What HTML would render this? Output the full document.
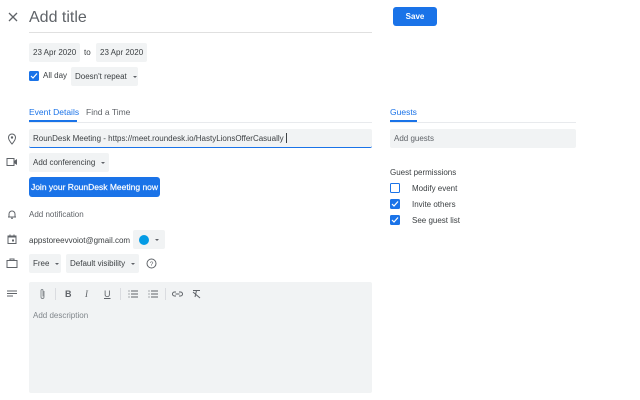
<!DOCTYPE html>
<html><head><meta charset="utf-8"><style>
*{box-sizing:border-box;margin:0;padding:0}
body{width:640px;height:400px;background:#fff;font-family:"Liberation Sans",Arial,sans-serif;color:#3c4043;position:relative;overflow:hidden;font-size:8px}
.a{position:absolute;white-space:nowrap}
.box{position:absolute;background:#f1f3f4;border-radius:2px;display:flex;align-items:center;padding-left:4px;font-size:8px;color:#3c4043;white-space:nowrap}
.cb{position:absolute;width:10px;height:10px;border-radius:1.5px;background:#1a73e8}
.cb svg{position:absolute;left:1px;top:1px}
.caret{display:inline-block;width:0;height:0;border-left:2.5px solid transparent;border-right:2.5px solid transparent;border-top:2.5px solid #5f6368;margin-left:6px}
.ic{position:absolute}
</style></head><body>
<svg class="ic" style="left:8px;top:12px" width="10" height="10" viewBox="0 0 10 10"><path d="M1 1L9 9M9 1L1 9" stroke="#5f6368" stroke-width="1.3"/></svg>
<div class="a" style="left:29px;top:9px;font-size:16px;color:#5f6368">Add title</div>
<div class="a" style="left:29px;top:32px;width:343px;height:1px;background:#e0e0e0"></div>
<div class="a" style="left:393px;top:7px;width:44px;height:19px;background:#1a73e8;border-radius:3px;color:#fff;font-size:8px;font-weight:bold;display:flex;align-items:center;justify-content:center">Save</div>

<div class="box" style="left:29px;top:43px;width:51px;height:19px">23 Apr 2020</div>
<div class="a" style="left:84px;top:48px;font-size:8px">to</div>
<div class="box" style="left:96px;top:43px;width:51px;height:19px">23 Apr 2020</div>
<div class="cb" style="left:29px;top:71px"><svg width="8" height="8" viewBox="0 0 8 8"><path d="M1 4L3 6L7 1.5" stroke="#fff" stroke-width="1.2" fill="none"/></svg></div>
<div class="a" style="left:43px;top:71px">All day</div>
<div class="box" style="left:71px;top:67px;width:67px;height:19px">Doesn't repeat<span class="caret"></span></div>

<div class="a" style="left:29px;top:107px;font-size:8.5px;color:#1a73e8">Event Details</div>
<div class="a" style="left:86px;top:107px;font-size:8.5px;color:#5f6368">Find a Time</div>
<div class="a" style="left:29px;top:122px;width:343px;height:1px;background:#e8eaed"></div>
<div class="a" style="left:29px;top:120px;width:48px;height:2px;background:#1a73e8"></div>

<svg class="ic" style="left:7px;top:133px" width="10" height="12" viewBox="0 0 10 12"><path d="M5 11C5 11 1.5 7 1.5 4.5A3.5 3.5 0 0 1 8.5 4.5C8.5 7 5 11 5 11Z" stroke="#5f6368" stroke-width="1" fill="none"/><circle cx="5" cy="4.5" r="1.2" fill="#5f6368"/></svg>
<div class="box" style="left:29px;top:129px;width:343px;height:19px;border-bottom:1.5px solid #1a73e8">RounDesk Meeting - https://meet.roundesk.io/HastyLionsOfferCasually<span style="display:inline-block;width:1px;height:10px;background:#3c4043;margin-left:2px"></span></div>

<svg class="ic" style="left:6px;top:157px" width="12" height="10" viewBox="0 0 12 10"><rect x="1" y="1.5" width="7" height="7" stroke="#5f6368" fill="none"/><path d="M8 4L11 2V8L8 6Z" fill="#5f6368"/></svg>
<div class="box" style="left:29px;top:153px;width:80px;height:19px">Add conferencing<span class="caret"></span></div>
<div class="a" style="left:29px;top:177px;width:131px;height:20px;background:#1a73e8;border-radius:3px;color:#fff;font-size:8.5px;display:flex;align-items:center;justify-content:center;-webkit-text-stroke:0.2px #fff">Join your RounDesk Meeting now</div>

<svg class="ic" style="left:7px;top:209px" width="10" height="10" viewBox="0 0 10 10"><path d="M2 8V5A3 3 0 0 1 8 5V8ZM1 8H9M4 9.3H6" stroke="#5f6368" fill="none"/></svg>
<div class="a" style="left:29px;top:210px;color:#5f6368">Add notification</div>

<svg class="ic" style="left:7px;top:234px" width="10" height="10" viewBox="0 0 10 10"><rect x="1" y="2" width="8" height="7.5" stroke="#5f6368" fill="none"/><path d="M1 3H9M3 0.5V2.5M7 0.5V2.5" stroke="#5f6368"/><rect x="5" y="5.5" width="2" height="2" fill="#5f6368"/></svg>
<div class="a" style="left:29px;top:236px">appstoreevvoiot@gmail.com</div>
<div class="box" style="left:133px;top:230px;width:32px;height:19px;padding-left:6px"><span style="width:10px;height:10px;border-radius:50%;background:#039be5;display:inline-block"></span><span class="caret"></span></div>

<svg class="ic" style="left:6px;top:258px" width="12" height="10" viewBox="0 0 12 10"><rect x="1" y="2.5" width="10" height="7" stroke="#5f6368" fill="none"/><path d="M4 2.5V1H8V2.5" stroke="#5f6368" fill="none"/></svg>
<div class="box" style="left:29px;top:254px;width:32px;height:19px">Free<span class="caret"></span></div>
<div class="box" style="left:66px;top:254px;width:73px;height:19px">Default visibility<span class="caret"></span></div>
<svg class="ic" style="left:146px;top:258px" width="11" height="11" viewBox="0 0 11 11"><circle cx="5.5" cy="5.5" r="4.5" stroke="#5f6368" fill="none"/><text x="5.5" y="8" font-size="6.5" text-anchor="middle" fill="#5f6368" font-family="Liberation Sans">?</text></svg>

<svg class="ic" style="left:7px;top:290px" width="10" height="8" viewBox="0 0 10 8"><path d="M0 1H10M0 3.5H10M0 6H6" stroke="#5f6368"/></svg>
<div class="a" style="left:29px;top:282px;width:343px;height:111px;background:#f1f3f4;border-radius:2px"></div>
<svg class="ic" style="left:39px;top:288px" width="7" height="12" viewBox="0 0 7 12"><path d="M5 3V9A1.5 1.5 0 0 1 2 9V2.5A1 1 0 0 1 4 2.5V8.5" stroke="#80868b" fill="none" stroke-width="0.9"/></svg>
<div class="a" style="left:55px;top:288px;width:1px;height:12px;background:#dadce0"></div>
<div class="a" style="left:65px;top:289px;font-weight:bold;font-size:9px;color:#5f6368">B</div>
<div class="a" style="left:85px;top:289px;font-style:italic;font-size:9px;color:#5f6368;font-family:'Liberation Serif',serif">I</div>
<div class="a" style="left:104px;top:289px;text-decoration:underline;font-size:9px;color:#5f6368">U</div>
<div class="a" style="left:120px;top:288px;width:1px;height:12px;background:#dadce0"></div>
<svg class="ic" style="left:128px;top:290px" width="10" height="8" viewBox="0 0 10 8"><path d="M3 1H10M3 4H10M3 7H10M0.5 1H1.5M0.5 4H1.5M0.5 7H1.5" stroke="#5f6368" stroke-width="0.9"/></svg>
<svg class="ic" style="left:148px;top:290px" width="10" height="8" viewBox="0 0 10 8"><path d="M3 1H10M3 4H10M3 7H10M0.5 1H1.5M0.5 4H1.5M0.5 7H1.5" stroke="#5f6368" stroke-width="0.9"/></svg>
<div class="a" style="left:165px;top:288px;width:1px;height:12px;background:#dadce0"></div>
<svg class="ic" style="left:172px;top:291px" width="11" height="6" viewBox="0 0 11 6"><path d="M4 1H2.5A2 2 0 0 0 2.5 5H4M7 1H8.5A2 2 0 0 1 8.5 5H7M3.5 3H7.5" stroke="#5f6368" fill="none"/></svg>
<svg class="ic" style="left:192px;top:289px" width="10" height="10" viewBox="0 0 10 10"><path d="M1 1.5H8M4.5 1.5L3 8M1 3L8 9" stroke="#5f6368" fill="none"/></svg>
<div class="a" style="left:33px;top:311px;color:#80868b">Add description</div>

<div class="a" style="left:390px;top:107px;font-size:8.5px;color:#1a73e8">Guests</div>
<div class="a" style="left:390px;top:122px;width:186px;height:1px;background:#e8eaed"></div>
<div class="a" style="left:390px;top:120px;width:27px;height:2px;background:#1a73e8"></div>
<div class="box" style="left:390px;top:129px;width:186px;height:19px;color:#5f6368">Add guests</div>
<div class="a" style="left:390px;top:168px">Guest permissions</div>
<div class="a" style="left:390px;top:183px;width:10px;height:10px;border:1.3px solid #1a73e8;border-radius:1.5px"></div>
<div class="a" style="left:412px;top:184px">Modify event</div>
<div class="cb" style="left:390px;top:199px"><svg width="8" height="8" viewBox="0 0 8 8"><path d="M1 4L3 6L7 1.5" stroke="#fff" stroke-width="1.2" fill="none"/></svg></div>
<div class="a" style="left:412px;top:200px">Invite others</div>
<div class="cb" style="left:390px;top:215px"><svg width="8" height="8" viewBox="0 0 8 8"><path d="M1 4L3 6L7 1.5" stroke="#fff" stroke-width="1.2" fill="none"/></svg></div>
<div class="a" style="left:412px;top:216px">See guest list</div>
</body></html>
